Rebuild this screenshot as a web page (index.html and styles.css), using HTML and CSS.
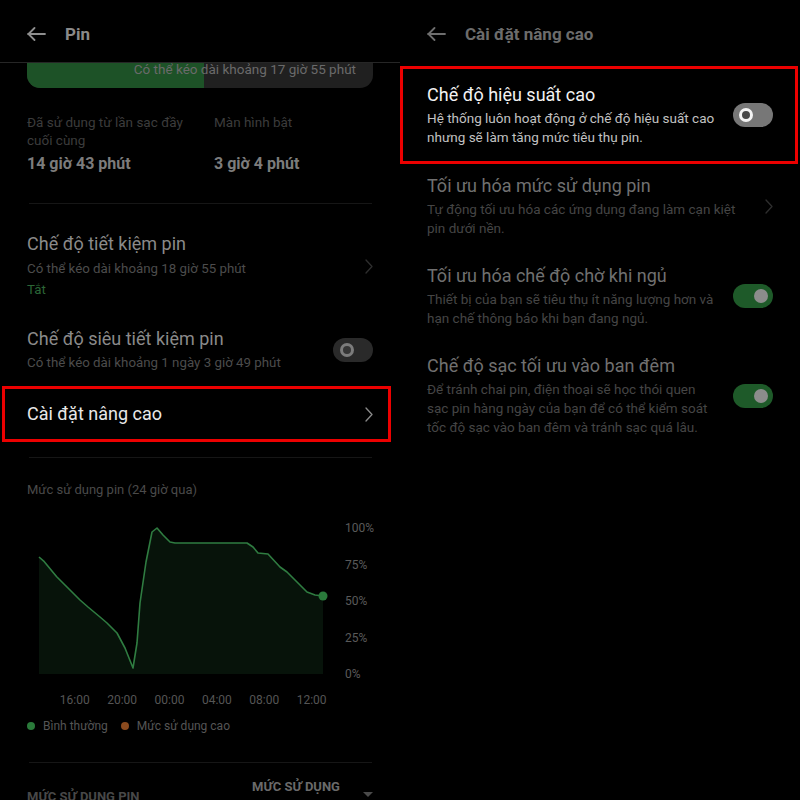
FILE: index.html
```html
<!DOCTYPE html>
<html lang="vi">
<head>
<meta charset="utf-8">
<title>Pin</title>
<link rel="stylesheet" href="styles.css">
</head>
<body>
<div class="screen">
  <section class="pane pane-left">
    <header class="appbar appbar-line">
      <svg class="back" viewBox="0 0 19 14"><path d="M1 7H18M7.5 1L1.5 7l6 6" /></svg>
      <span class="appbar-title">Pin</span>
    </header>
    <div class="est-bar">
      <div class="est-fill"></div>
      <span class="est-text">Có thể kéo dài khoảng 17 giờ 55 phút</span>
    </div>
    <div class="stats">
      <div class="stat-label">Đã sử dụng từ lần sạc đầy<br>cuối cùng</div>
      <div class="stat-label">Màn hình bật</div>
      <div class="stat-value">14 giờ 43 phút</div>
      <div class="stat-value">3 giờ 4 phút</div>
    </div>
    <div class="divider divider-stats"></div>
    <div class="item item-saver">
      <div class="item-body">
        <div class="item-title">Chế độ tiết kiệm pin</div>
        <div class="item-sub item-sub-tall">Có thể kéo dài khoảng 18 giờ 55 phút</div>
        <div class="item-status">Tắt</div>
      </div>
      <svg class="chev chev-dim" viewBox="0 0 8 15"><path d="M1 1l6 6.5L1 14" /></svg>
    </div>
    <div class="item item-super">
      <div class="item-body">
        <div class="item-title">Chế độ siêu tiết kiệm pin</div>
        <div class="item-sub">Có thể kéo dài khoảng 1 ngày 3 giờ 49 phút</div>
      </div>
      <div class="toggle toggle-off-dim"><span class="knob"></span></div>
    </div>
    <div class="boxed">
      <span class="boxed-title">Cài đặt nâng cao</span>
      <svg class="chev chev-bright" viewBox="0 0 8 15"><path d="M1 1l6 6.5L1 14" /></svg>
    </div>
    <div class="divider divider-chart"></div>
    <div class="chart-title">Mức sử dụng pin (24 giờ qua)</div>
    <div class="chart-row">
      <svg class="chart" viewBox="0 515 330 165">
        <path class="chart-fill" d="M39 557L44.3 561.7L56.7 576.7L80 600L88 607L100 617L107 623L117 633L125 648L133 668L137 643L140 603L146 562L152 532L157 528L163 535L170 542L175 543L247 543L253 547L258 553L268 554L280 567L287 572L300 585L307 592L315 595L323 596L323 674L39 674Z" />
        <path class="chart-line" d="M39 557L44.3 561.7L56.7 576.7L80 600L88 607L100 617L107 623L117 633L125 648L133 668L137 643L140 603L146 562L152 532L157 528L163 535L170 542L175 543L247 543L253 547L258 553L268 554L280 567L287 572L300 585L307 592L315 595L323 596" />
        <circle class="chart-dot" cx="323" cy="596" r="4.5" />
      </svg>
      <div class="y-axis">
        <span>100%</span><span>75%</span><span>50%</span><span>25%</span><span>0%</span>
      </div>
    </div>
    <div class="x-axis">
      <span>16:00</span><span>20:00</span><span>00:00</span><span>04:00</span><span>08:00</span><span>12:00</span>
    </div>
    <div class="legend">
      <span class="dot dot-green"></span><span>Bình thường</span>
      <span class="dot dot-orange"></span><span>Mức sử dụng cao</span>
    </div>
    <div class="divider divider-usage"></div>
    <div class="usage-head">
      <span class="usage-label">MỨC SỬ DỤNG PIN</span>
      <div class="usage-sort">
        <span class="usage-sort-text">MỨC SỬ DỤNG</span>
        <span class="caret"></span>
      </div>
    </div>
  </section>

  <section class="pane pane-right">
    <header class="appbar">
      <svg class="back back-dim" viewBox="0 0 19 14"><path d="M1 7H18M7.5 1L1.5 7l6 6" /></svg>
      <span class="appbar-title appbar-title-dim">Cài đặt nâng cao</span>
    </header>
    <div class="hl-box">
      <div class="set-body">
        <div class="set-title set-title-hl">Chế độ hiệu suất cao</div>
        <div class="set-sub set-sub-hl">Hệ thống luôn hoạt động ở chế độ hiệu suất cao<br>nhưng sẽ làm tăng mức tiêu thụ pin.</div>
      </div>
      <div class="toggle toggle-off"><span class="knob"></span></div>
    </div>
    <div class="set-item set-item-first">
      <div class="set-body">
        <div class="set-title">Tối ưu hóa mức sử dụng pin</div>
        <div class="set-sub">Tự động tối ưu hóa các ứng dụng đang làm cạn kiệt<br>pin dưới nền.</div>
      </div>
      <svg class="chev chev-dim" viewBox="0 0 8 15"><path d="M1 1l6 6.5L1 14" /></svg>
    </div>
    <div class="set-item">
      <div class="set-body">
        <div class="set-title">Tối ưu hóa chế độ chờ khi ngủ</div>
        <div class="set-sub">Thiết bị của bạn sẽ tiêu thụ ít năng lượng hơn và<br>hạn chế thông báo khi bạn đang ngủ.</div>
      </div>
      <div class="toggle toggle-on"><span class="knob"></span></div>
    </div>
    <div class="set-item">
      <div class="set-body">
        <div class="set-title">Chế độ sạc tối ưu vào ban đêm</div>
        <div class="set-sub">Để tránh chai pin, điện thoại sẽ học thói quen<br>sạc pin hàng ngày của bạn để có thể kiểm soát<br>tốc độ sạc vào ban đêm và tránh sạc quá lâu.</div>
      </div>
      <div class="toggle toggle-on"><span class="knob"></span></div>
    </div>
  </section>
</div>
</body>
</html>
```

FILE: styles.css
```css
html, body {
  margin: 0;
  padding: 0;
  background: #000;
}

body {
  font-family: Roboto, "Noto Sans", "Liberation Sans", sans-serif;
  color: #888;
}

.screen {
  display: flex;
  width: 800px;
  height: 800px;
  overflow: hidden;
}

.pane {
  flex: none;
  width: 400px;
  height: 800px;
  overflow: hidden;
}

/* App bar */
.appbar {
  display: flex;
  align-items: center;
  height: 62px;
  box-sizing: border-box;
  padding: 6px 0 0 27px;
}

.appbar-line {
  height: 63px;
  border-bottom: 1px solid #262626;
}

.back {
  width: 19px;
  height: 14px;
  margin-right: 19px;
  fill: none;
  stroke: #8e8e8e;
  stroke-width: 1.8;
  stroke-linecap: round;
  stroke-linejoin: round;
}

.back-dim {
  stroke: #6e6e6e;
}

.appbar-title {
  font-size: 17px;
  font-weight: 700;
  color: #8a8a8a;
}

.appbar-title-dim {
  color: #6c6c6c;
}

/* Estimate bar */
.est-bar {
  display: grid;
  margin: 0 27px;
  height: 25px;
  border-radius: 0 0 13px 13px;
  background: #202020;
  overflow: hidden;
}

.est-fill,
.est-text {
  grid-area: 1 / 1;
}

.est-fill {
  width: 177px;
  background: #1d5227;
}

.est-text {
  justify-self: end;
  padding-right: 17px;
  font-size: 13.5px;
  line-height: 13px;
  color: #6a6a6a;
}

/* Stats */
.stats {
  display: grid;
  grid-template-columns: 170px 1fr;
  column-gap: 17px;
  margin: 25px 27px 0;
}

.stat-label {
  font-size: 13.5px;
  line-height: 18px;
  color: #3c3c3c;
}

.stat-value {
  margin-top: 5px;
  font-size: 16px;
  line-height: 20px;
  font-weight: 700;
  color: #7c7c7c;
}

/* Dividers */
.divider {
  height: 1px;
  background: #161616;
  margin: 0 28px 0 29px;
}

.divider-stats { margin-top: 29px; }
.divider-chart { margin-top: 15px; }
.divider-usage { margin-top: 29px; }

/* Left list items */
.item {
  display: flex;
  align-items: center;
  padding: 0 27px;
}

.item-saver { margin-top: 28px; }
.item-super { margin-top: 27px; }

.item-body {
  flex: 1;
}

.item-title {
  font-size: 18px;
  line-height: 24px;
  color: #8a8a8a;
}

.item-sub {
  margin-top: 2px;
  font-size: 13.3px;
  line-height: 20px;
  color: #4c4c4c;
}

.item-sub-tall {
  line-height: 21px;
}

.item-status {
  font-size: 13.3px;
  line-height: 21px;
  color: #2b6636;
}

.chev {
  flex: none;
  width: 8px;
  height: 15px;
  fill: none;
  stroke-width: 1.3;
  stroke-linecap: round;
  stroke-linejoin: round;
}

.chev-dim { stroke: #2e2e2e; }
.chev-bright { stroke: #8a8a8a; }

/* Toggles */
.toggle {
  flex: none;
  display: flex;
  align-items: center;
  width: 40px;
  height: 24px;
  box-sizing: border-box;
  border-radius: 12px;
}

.toggle .knob {
  display: block;
  box-sizing: border-box;
  width: 14px;
  height: 14px;
  border-radius: 50%;
}

.toggle-off-dim {
  padding-left: 7px;
  background: #2a2a2a;
}

.toggle-off-dim .knob {
  border: 3px solid #7c7c7c;
  background: #363636;
}

.toggle-off {
  padding-left: 6px;
  background: #777;
}

.toggle-off .knob {
  border: 3px solid #f4f4f4;
  background: #484848;
}

.toggle-on {
  justify-content: flex-end;
  padding-right: 5px;
  background: #1e5a29;
}

.toggle-on .knob {
  width: 14px;
  height: 14px;
  background: #8c8c8c;
}

/* Boxed item (left) */
.boxed {
  display: flex;
  align-items: center;
  margin: 13px 9px 0 2px;
  height: 56px;
  box-sizing: border-box;
  border: 3px solid #ec0000;
  padding: 0 15px 0 22px;
}

.boxed-title {
  flex: 1;
  font-size: 18px;
  line-height: 24px;
  color: #e8e8e8;
}

/* Chart */
.chart-title {
  margin: 24px 27px 0;
  font-size: 13px;
  line-height: 16px;
  color: #4a4a4a;
}

.chart-row {
  display: flex;
  margin-top: 17px;
  height: 165px;
}

.chart {
  flex: none;
  width: 330px;
  height: 165px;
}

.chart-fill {
  fill: #07130a;
}

.chart-line {
  fill: none;
  stroke: #2f7c41;
  stroke-width: 1.6;
  stroke-linejoin: round;
}

.chart-dot {
  fill: #2a7a3b;
}

.y-axis {
  display: flex;
  flex-direction: column;
  justify-content: space-between;
  height: 160px;
  margin: 6px 0 0 15px;
  font-size: 12px;
  line-height: 14px;
  color: #5a5a5a;
}

.x-axis {
  display: flex;
  margin-top: 13px;
  padding-left: 51px;
  font-size: 12px;
  line-height: 14px;
  color: #555;
}

.x-axis span {
  width: 47.4px;
  text-align: center;
}

.legend {
  display: flex;
  align-items: center;
  margin-top: 12px;
  padding-left: 27px;
  font-size: 12px;
  line-height: 14px;
  color: #555;
}

.dot {
  width: 8px;
  height: 8px;
  border-radius: 50%;
  margin-right: 8px;
}

.dot-green { background: #2a7a3a; }
.dot-orange { background: #8a4a1e; margin-left: 13px; }

/* Usage header */
.usage-head {
  display: flex;
  margin-top: 16px;
  padding: 0 27px;
}

.usage-label {
  flex: 1;
  margin-top: 10px;
  font-size: 13px;
  line-height: 16px;
  font-weight: 700;
  color: #484848;
}

.usage-sort {
  display: flex;
  justify-content: space-between;
  width: 121px;
}

.usage-sort-text {
  font-size: 13px;
  line-height: 16px;
  font-weight: 700;
  color: #6a6a6a;
}

.caret {
  margin-top: 13px;
  width: 0;
  height: 0;
  border-left: 5px solid transparent;
  border-right: 5px solid transparent;
  border-top: 5px solid #4a4a4a;
}

/* Right pane */
.hl-box {
  display: flex;
  align-items: center;
  margin-top: 4px;
  width: 398px;
  height: 98px;
  box-sizing: border-box;
  border: 3px solid #ec0000;
  padding: 0 22px 0 24px;
}

.set-body {
  flex: 1;
}

.set-title {
  font-size: 18px;
  line-height: 24px;
  color: #707070;
}

.set-sub {
  margin-top: 2px;
  font-size: 13.5px;
  line-height: 19px;
  color: #454545;
}

.set-title-hl { color: #f2f2f2; }
.set-sub-hl { color: #c2c2c2; }

.set-item {
  display: flex;
  align-items: center;
  margin-top: 26px;
  padding: 0 27px;
}

.set-item-first {
  margin-top: 10px;
}
```
